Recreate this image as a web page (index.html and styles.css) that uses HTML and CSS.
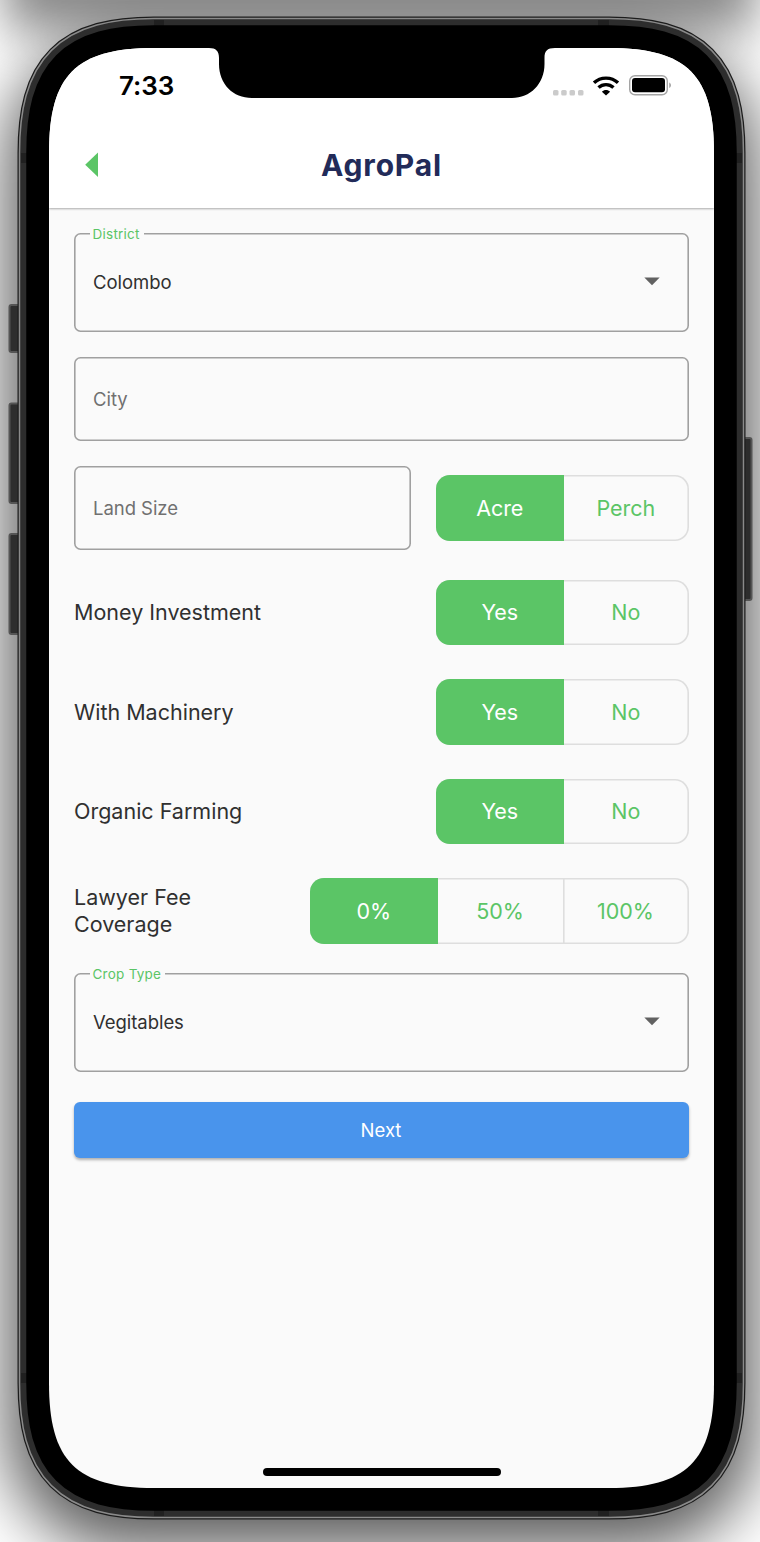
FILE: index.html
```html
<!DOCTYPE html>
<html lang="en">
<head>
<meta charset="utf-8">
<title>AgroPal</title>
<link rel="stylesheet" href="styles.css">
</head>
<body>
<div class="stage">
  <svg class="device" width="760" height="1542" viewBox="0 0 760 1542" aria-hidden="true">
    <defs>
      <filter id="soft" x="-30%" y="-20%" width="160%" height="140%"><feGaussianBlur stdDeviation="32"/></filter>
      <filter id="soft2" x="-30%" y="-200%" width="160%" height="500%"><feGaussianBlur stdDeviation="24"/></filter>
      <path id="body" d="M154 48H609C687 48 714 75 714 153V1383C714 1461 687 1488 609 1488H154C76 1488 49 1461 49 1383V153C49 75 76 48 154 48Z"/>
    </defs>
    <rect width="760" height="1542" fill="#fff"/>
    <rect x="6" y="40" width="750" height="1510" rx="120" fill="#000" opacity=".64" filter="url(#soft)"/>
    <rect x="4" y="-60" width="752" height="90" fill="#000" opacity=".46" filter="url(#soft2)"/>
    <g fill="#2d2d2d" stroke="#555" stroke-width="2">
      <rect x="9.500" y="305" width="14" height="47" rx="2"/>
      <rect x="9.500" y="403.500" width="14" height="99.500" rx="2"/>
      <rect x="9.500" y="534" width="14" height="100" rx="2"/>
      <rect x="738" y="438" width="13.500" height="162" rx="2"/>
    </g>
    <use href="#body" stroke="#1c1c1c" stroke-width="63"/>
    <use href="#body" stroke="#8a8a8a" stroke-width="60.500"/>
    <use href="#body" stroke="#2d2d2d" stroke-width="57.500"/>
    <g fill="#202020">
      <rect x="154" y="20" width="10" height="6"/><rect x="598" y="20" width="11" height="6"/>
      <rect x="154" y="1510" width="10" height="6"/><rect x="598" y="1510" width="11" height="6"/>
      <rect x="21" y="153" width="6" height="10"/><rect x="735" y="153" width="7" height="10"/>
      <rect x="21" y="1373" width="6" height="10"/><rect x="735" y="1373" width="7" height="10"/>
    </g>
    <use href="#body" stroke="#000" stroke-width="45.500"/>
  </svg>

  <main class="screen">
    <header class="top">
      <svg class="notch" width="346" height="50" viewBox="0 0 346 50" aria-hidden="true"><path d="M0 0H346C338 0 335.500 3 335.500 10V16C335.500 36 321 50 303 50H43C24 50 10 36 10 16V10C10 3 7 0 0 0Z"/></svg>
      <div class="status">
        <span class="time">7:33</span>
        <span class="indicators">
          <svg class="signal" width="31" height="6" viewBox="0 0 31 6" fill="#cbcbcb"><rect width="5.500" height="5.500" rx="1.500"/><rect x="8.200" width="5.500" height="5.500" rx="1.500"/><rect x="16.500" width="5.500" height="5.500" rx="1.500"/><rect x="25" width="5.500" height="5.500" rx="1.500"/></svg>
          <svg class="wifi" width="28" height="20" viewBox="0 0 28 20" fill="none" stroke="#000" stroke-width="3.400"><path d="M2 6.800C8.500 .500 19.500 .500 26 6.800M6.500 11.600C10.800 7.600 17.200 7.600 21.500 11.600"/><path d="M14 19.600L9.900 15.700C12.200 13.400 15.800 13.400 18.100 15.700Z" fill="#000" stroke="none"/></svg>
          <svg class="battery" width="43" height="21" viewBox="0 0 43 21"><rect x=".7" y=".7" width="37.600" height="19" rx="5.300" fill="#fff" stroke="#a4a4a4" stroke-width="1.400"/><rect x="3" y="3" width="33" height="14.300" rx="3" fill="#000"/><path d="M40.200 7.500C42.600 8.500 42.600 12 40.200 13Z" fill="#a4a4a4"/></svg>
        </span>
      </div>
      <div class="appbar">
        <svg class="back" width="14" height="26" viewBox="0 0 14 26"><path d="M13 .500V25L.200 12.750Z" fill="#5bc566"/></svg>
        <h1 class="title">AgroPal</h1>
      </div>
    </header>

    <form class="form">
      <div class="field select">
        <span class="legend">District</span>
        <span class="value">Colombo</span>
        <svg class="caret" width="16" height="9" viewBox="0 0 16 9"><path d="M.300 .500H15.700L8 8.300Z"/></svg>
      </div>
      <div class="field hint city">City</div>
      <div class="row land">
        <div class="field hint size">Land Size</div>
        <div class="toggle"><span class="seg on">Acre</span><span class="seg">Perch</span></div>
      </div>
      <div class="row">
        <span class="label">Money Investment</span>
        <div class="toggle"><span class="seg on">Yes</span><span class="seg">No</span></div>
      </div>
      <div class="row">
        <span class="label">With Machinery</span>
        <div class="toggle"><span class="seg on">Yes</span><span class="seg">No</span></div>
      </div>
      <div class="row">
        <span class="label">Organic Farming</span>
        <div class="toggle"><span class="seg on">Yes</span><span class="seg">No</span></div>
      </div>
      <div class="row">
        <span class="label">Lawyer Fee<br>Coverage</span>
        <div class="toggle wide"><span class="seg on">0%</span><span class="seg">50%</span><span class="seg">100%</span></div>
      </div>
      <div class="field select crop">
        <span class="legend">Crop Type</span>
        <span class="value">Vegitables</span>
        <svg class="caret" width="16" height="9" viewBox="0 0 16 9"><path d="M.300 .500H15.700L8 8.300Z"/></svg>
      </div>
      <button class="next" type="button">Next</button>
    </form>
    <div class="home"></div>
  </main>
</div>
</body>
</html>
```
FILE: styles.css
```css
* { box-sizing: border-box; }
body { margin: 0; font-family: Inter, "Liberation Sans", sans-serif; }
.stage { position: relative; width: 760px; height: 1542px; padding: 48px 46px 54px 49px; overflow: hidden; }
.device { position: absolute; inset: 0; }
.screen {
  position: relative;
  display: flex;
  flex-direction: column;
  height: 1440px;
  background: #fafafa;
  clip-path: path("M105 0H560C638 0 665 27 665 105V1335C665 1413 638 1440 560 1440H105C27 1440 0 1413 0 1335V105C0 27 27 0 105 0Z");
}
.top { position: relative; height: 160px; background: #fff; box-shadow: 0 1px 2px rgba(0,0,0,.32); }
.notch { position: absolute; left: 160px; top: 0; }
.status { display: flex; justify-content: space-between; height: 75px; padding: 0 42px 0 70px; align-items: center; }
.time { font-size: 26px; font-weight: 600; letter-spacing: -.1px; }
.indicators { display: flex; align-items: flex-end; }
.signal { margin-bottom: 0; }
.wifi { margin-left: 8px; }
.battery { margin-left: 9px; }
.appbar { display: grid; grid-template-columns: 100px 1fr 100px; align-items: center; height: 84px; }
.back { margin-left: 36px; }
.title { margin: 0; text-align: center; font-size: 30px; font-weight: 700; letter-spacing: .8px; color: #222b59; }
.form { display: flex; flex-direction: column; padding: 25px 25px 0; }
.field { position: relative; display: flex; align-items: center; height: 84px; padding: 0 19px; border-radius: 6.500px; box-shadow: inset 0 0 0 1.600px #a0a0a0; font-size: 18.500px; letter-spacing: -.05px; }
.select { justify-content: space-between; height: 99px; padding: 0 29px 2px 19px; color: #303030; }
.legend { position: absolute; top: -8px; left: 16px; padding: 0 4px 0 2.500px; background: #fafafa; color: #5bc566; font-size: 13.500px; line-height: 18px; letter-spacing: .25px; }
.caret { fill: #616161; }
.hint { color: #707070; }
.city { margin-top: 25px; }
.row { display: flex; align-items: center; justify-content: space-between; height: 65.500px; margin-top: 34px; }
.land { height: 84px; margin-top: 25px; margin-bottom: -4.500px; }
.size { width: 337px; }
.label { font-size: 21.500px; line-height: 26.500px; color: #303030; }
.toggle { display: flex; width: 253px; height: 65.500px; overflow: hidden; border-radius: 14px; box-shadow: inset 0 0 0 1.600px #dedede; }
.wide { width: 379px; }
.seg { flex: 1; display: flex; align-items: center; justify-content: center; padding-right: 1px; color: #5bc566; font-size: 21.500px; letter-spacing: -.05px; }
.seg + .seg + .seg { margin-left: -1px; box-shadow: inset 1.600px 0 0 #dedede; }
.on { flex: 0 0 127.500px; padding-right: 0; background: #5bc566; color: #fff; }
.crop { margin-top: 29.500px; }
.next { height: 56.500px; margin-top: 29.500px; padding: 0 1px 0 0; border: 0; border-radius: 6px; background: #4994ec; color: #fff; font: 18.500px Inter, sans-serif; box-shadow: 0 2px 3px rgba(0,0,0,.3); }
.home { width: 238px; height: 8px; margin: auto auto 12px 214px; border-radius: 4px; background: #000; }
```
